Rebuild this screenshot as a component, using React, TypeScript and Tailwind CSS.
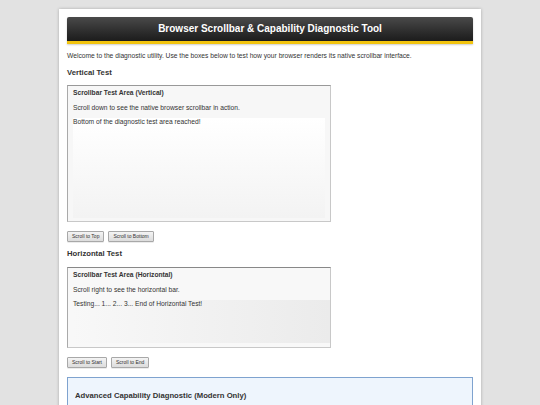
export default function App() {
  const btn =
    "h-[11px] px-[4px] border border-[#a8a8a8] rounded-[1px] bg-gradient-to-b from-[#f4f4f4] to-[#dcdcdc] text-[5px] leading-[9px] text-[#333] shadow-[0_0.5px_0.5px_rgba(0,0,0,0.15)]";
  return (
    <div className="min-h-[405px] bg-[#e2e2e2] pt-[9px] font-['Liberation_Sans',Arial,sans-serif] text-[#333]">
      <div className="mx-auto w-[422px] min-h-[396px] bg-white p-[8px] shadow-[0_0_3px_rgba(0,0,0,0.25)]">
        <div className="h-[27px] rounded-t-[2px] border-b-[3px] border-[#f2c40f] bg-gradient-to-b from-[#4a4a4a] to-[#1c1c1c] flex items-center justify-center shadow-[0_1px_2px_rgba(0,0,0,0.2)]">
          <h1 className="text-[10px] leading-[12px] font-bold text-white">
            Browser Scrollbar &amp; Capability Diagnostic Tool
          </h1>
        </div>

        <p className="mt-[8px] text-[6.7px] leading-[8px]">
          Welcome to the diagnostic utility. Use the boxes below to test how your browser renders its native scrollbar interface.
        </p>

        <h3 className="mt-[8px] text-[7.7px] leading-[9px] font-bold">Vertical Test</h3>

        <div className="mt-[8px] w-[264px] h-[137px] border border-[#aaa] border-t-[#999] border-r-[#c8c8c8] border-b-[#c8c8c8] bg-[#f7f7f7] pt-[3px] px-[5px] pb-[3px] flex flex-col">
          <div className="text-[6.7px] leading-[8px] font-bold">Scrollbar Test Area (Vertical)</div>
          <p className="mt-[7px] text-[6.7px] leading-[8px]">Scroll down to see the native browser scrollbar in action.</p>
          <div className="mt-[6px] flex-1 bg-gradient-to-b from-white to-[#f3f3f3]">
            <p className="text-[6.7px] leading-[8px]">Bottom of the diagnostic test area reached!</p>
          </div>
        </div>

        <div className="mt-[9px] flex gap-[4px]">
          <button className={btn}>Scroll to Top</button>
          <button className={btn}>Scroll to Bottom</button>
        </div>

        <h3 className="mt-[7px] text-[7.7px] leading-[9px] font-bold">Horizontal Test</h3>

        <div className="mt-[9px] w-[264px] h-[81px] border border-[#aaa] border-t-[#888] border-r-[#c8c8c8] border-b-[#c8c8c8] bg-[#f8f8f8] pt-[3px] pl-[5px] pb-[4px] flex flex-col">
          <div className="text-[6.7px] leading-[8px] font-bold">Scrollbar Test Area (Horizontal)</div>
          <p className="mt-[7px] text-[6.7px] leading-[8px]">Scroll right to see the horizontal bar.</p>
          <div className="mt-[6px] flex-1 bg-gradient-to-r from-[#f8f8f8] to-[#ebebeb]">
            <p className="text-[6.7px] leading-[8px] whitespace-nowrap">Testing... 1... 2... 3... End of Horizontal Test!</p>
          </div>
        </div>

        <div className="mt-[9px] flex gap-[4px]">
          <button className={btn}>Scroll to Start</button>
          <button className={btn}>Scroll to End</button>
        </div>

        <div className="mt-[9px] border border-[#7fa3cf] bg-[#eef5fd] px-[7px] pt-[13px] pb-[10px]">
          <h3 className="text-[7.7px] leading-[9px] font-bold">Advanced Capability Diagnostic (Modern Only)</h3>
        </div>
      </div>
    </div>
  );
}
